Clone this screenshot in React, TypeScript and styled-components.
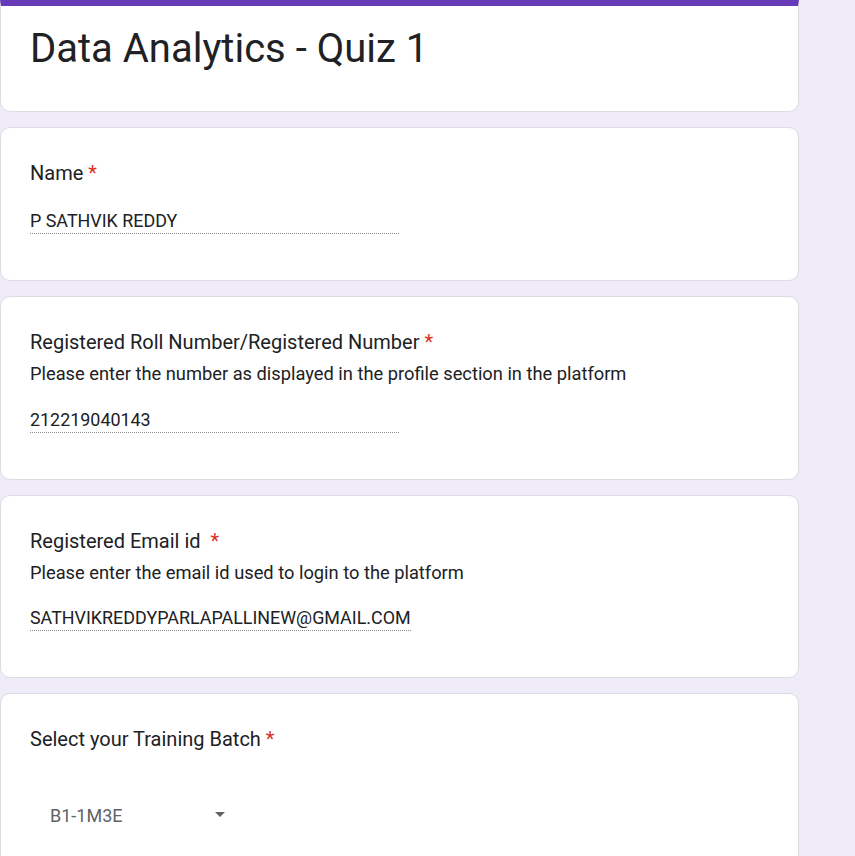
import styled, { createGlobalStyle } from "styled-components";

const GlobalStyle = createGlobalStyle`
  html, body {
    margin: 0;
    padding: 0;
    background: #f0ebf8;
    overflow: hidden;
    font-family: Roboto, "Liberation Sans", Arial, sans-serif;
    color: #202124;
  }
`;

type Question = {
  id: string;
  title: string;
  wideGap?: boolean;
  description?: string;
  answer: string;
};

const questions: Question[] = [
  { id: "name", title: "Name", answer: "P SATHVIK REDDY" },
  {
    id: "roll",
    title: "Registered Roll Number/Registered Number",
    description:
      "Please enter the number as displayed in the profile section in the platform",
    answer: "212219040143",
  },
  {
    id: "email",
    title: "Registered Email id",
    wideGap: true,
    description: "Please enter the email id used to login to the platform",
    answer: "SATHVIKREDDYPARLAPALLINEW@GMAIL.COM",
  },
];

export default function App() {
  return (
    <>
      <GlobalStyle />
      <FormColumn>
        <HeaderCard>
          <FormTitle>Data Analytics - Quiz 1</FormTitle>
        </HeaderCard>

        {questions.map((q) => (
          <QuestionCard key={q.id}>
            <QuestionTitle>
              {q.title}
              {q.wideGap ? "\u00a0 " : " "}
              <Required>*</Required>
            </QuestionTitle>
            {q.description && <Description>{q.description}</Description>}
            <AnswerWrap $hasDescription={!!q.description}>
              <Answer>{q.answer}</Answer>
            </AnswerWrap>
          </QuestionCard>
        ))}

        <QuestionCard $last>
          <QuestionTitle>
            Select your Training Batch <Required>*</Required>
          </QuestionTitle>
          <Dropdown>
            <span>B1-1M3E</span>
            <Caret />
          </Dropdown>
        </QuestionCard>
      </FormColumn>
    </>
  );
}

const FormColumn = styled.div`
  width: 799px;
  display: flex;
  flex-direction: column;
  gap: 15px;
`;

const Card = styled.div`
  box-sizing: border-box;
  background: white;
  border: 1px solid #dadce0;
  border-radius: 10px;
  padding: 30px 30px 46px 29px;
`;

const HeaderCard = styled(Card)`
  border-top: 6px solid #673ab7;
  border-radius: 0 0 10px 10px;
  padding-top: 19px;
  padding-bottom: 38px;
`;

const FormTitle = styled.h1`
  margin: 0;
  font-size: 40px;
  line-height: 48px;
  font-weight: 400;
  color: #202124;
`;

const QuestionCard = styled(Card)<{ $last?: boolean }>`
  padding-bottom: ${(p) => (p.$last ? "80px" : "46px")};
`;

const QuestionTitle = styled.div`
  font-size: 20px;
  line-height: 30px;
  font-weight: 400;
  white-space: pre-wrap;
`;

const Required = styled.span`
  color: #d93025;
`;

const Description = styled.div`
  margin-top: 5px;
  font-size: 18.3px;
  line-height: 24px;
`;

const AnswerWrap = styled.div<{ $hasDescription: boolean }>`
  margin-top: ${(p) => (p.$hasDescription ? "21.5px" : "21px")};
`;

const Answer = styled.div`
  display: inline-block;
  min-width: 50%;
  font-size: 17.9px;
  line-height: 24px;
  border-bottom: 1px dotted #8d8d8d;
`;

const Dropdown = styled.div`
  box-sizing: border-box;
  margin-top: 32px;
  width: 215px;
  height: 60px;
  padding: 0 20px;
  display: flex;
  align-items: center;
  justify-content: space-between;
  font-size: 18px;
  line-height: 24px;
  color: #5f6368;
`;

const Caret = styled.span`
  width: 0;
  height: 0;
  margin-top: -3px;
  border-left: 5px solid transparent;
  border-right: 5px solid transparent;
  border-top: 5px solid #5f6368;
`;
